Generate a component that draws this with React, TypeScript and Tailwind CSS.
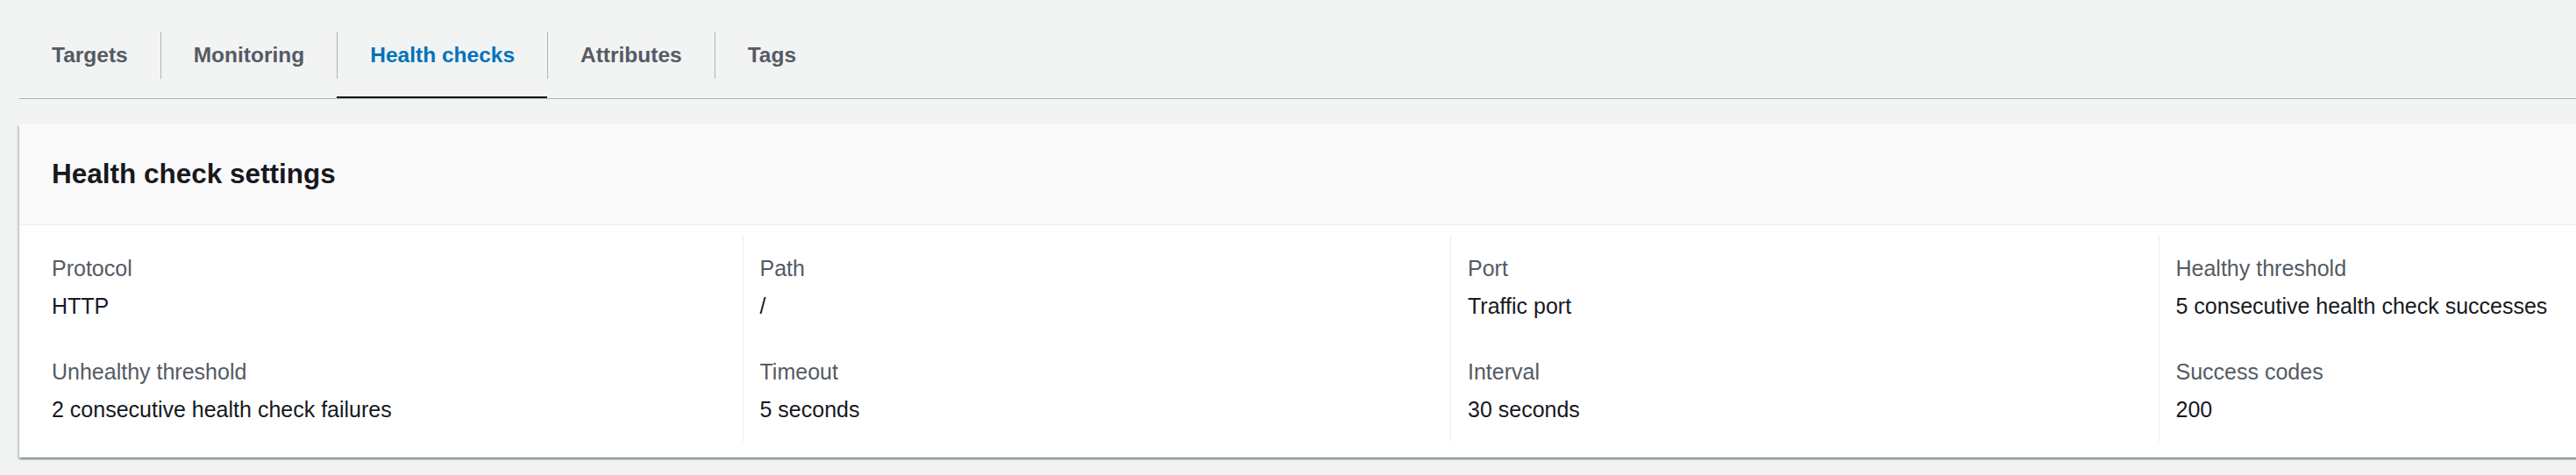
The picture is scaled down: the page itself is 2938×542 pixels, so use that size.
import React from "react";

const tabs = ["Targets", "Monitoring", "Health checks", "Attributes", "Tags"];

const columns = [
  [
    { label: "Protocol", value: "HTTP" },
    { label: "Unhealthy threshold", value: "2 consecutive health check failures" },
  ],
  [
    { label: "Path", value: "/" },
    { label: "Timeout", value: "5 seconds" },
  ],
  [
    { label: "Port", value: "Traffic port" },
    { label: "Interval", value: "30 seconds" },
  ],
  [
    { label: "Healthy threshold", value: "5 consecutive health check successes" },
    { label: "Success codes", value: "200" },
  ],
];

export default function App() {
  const active = "Health checks";

  return (
    <div className="w-[2938px] h-[542px] overflow-hidden bg-[#f2f3f3] font-['Liberation_Sans',Arial,sans-serif]">
      {/* tab bar */}
      <div className="ml-[22px] flex border-b border-[#aab7b8]">
        {tabs.map((tab, i) => (
          <div key={tab} className="flex flex-col">
            <div className="pt-[36px] pb-[20px]">
              <div
                className={
                  "h-[54px] flex items-center px-[37px] text-[24.5px] font-bold whitespace-nowrap " +
                  (i > 0 ? "border-l border-[#aab7b8] " : "") +
                  (tab === active ? "text-[#0073bb]" : "text-[#545b64]")
                }
              >
                {tab}
              </div>
            </div>
            <div className={"h-[2px] " + (tab === active ? "bg-[#16191f]" : "")} />
          </div>
        ))}
      </div>

      {/* settings card */}
      <div className="ml-[22px] mt-[29px] w-[3264px] bg-white shadow-[0_2px_2px_0_rgba(0,28,36,0.3),2px_2px_2px_0_rgba(0,28,36,0.15),-2px_2px_2px_0_rgba(0,28,36,0.15)]">
        <div className="h-[115px] flex items-center px-[37px] bg-[#fafafa] border-b border-[#eaeded]">
          <h2 className="text-[31.5px] font-bold text-[#16191f]">Health check settings</h2>
        </div>
        <div className="grid grid-cols-4 px-[17px] pt-[11px] pb-[18px]">
          {columns.map((col, i) => (
            <div
              key={i}
              className={
                "pt-[21px] pb-[19px] flex flex-col gap-[40px] " +
                (i > 0 ? "border-l border-[#eaeded] pl-[19px]" : "pl-[20px]")
              }
            >
              {col.map((f) => (
                <div key={f.label} className="flex flex-col gap-[8px]">
                  <div className="text-[25px] leading-[35px] text-[#545b64]">{f.label}</div>
                  <div className="text-[25px] leading-[35px] text-[#16191f]">{f.value}</div>
                </div>
              ))}
            </div>
          ))}
        </div>
      </div>
    </div>
  );
}
